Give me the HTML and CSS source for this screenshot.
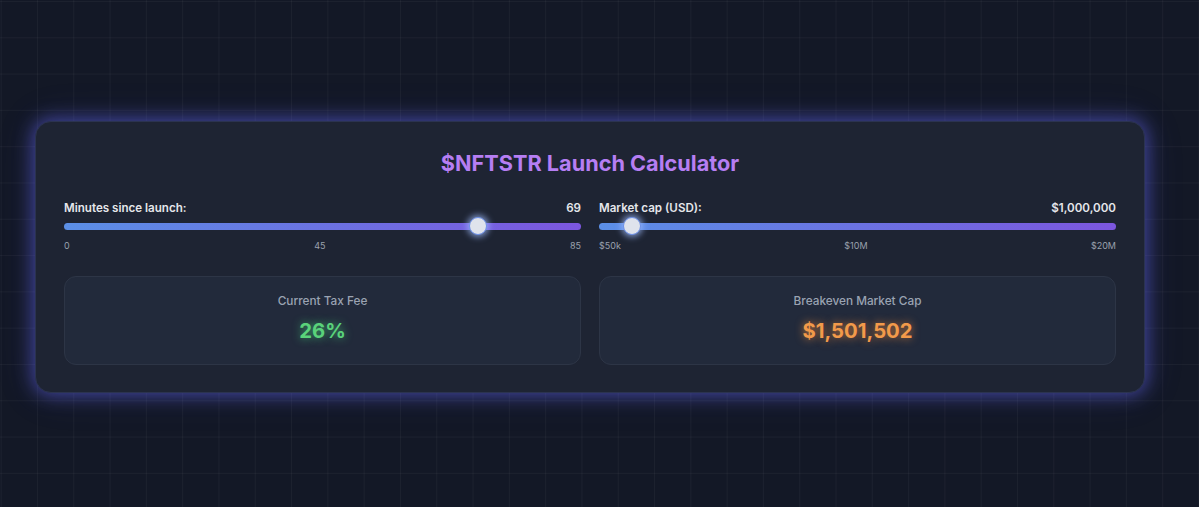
FILE: index.html
```html
<!DOCTYPE html>
<html lang="en">
<head>
<meta charset="utf-8">
<title>$NFTSTR Launch Calculator</title>
<link rel="stylesheet" href="styles.css">
</head>
<body>
<main class="card">
  <h1 class="title">$NFTSTR Launch Calculator</h1>
  <div class="controls">
    <div class="control">
      <div class="control-head">
        <span>Minutes since launch:</span>
        <span>69</span>
      </div>
      <input class="range" type="range" min="0" max="85" value="69">
      <div class="ticks"><span>0</span><span>45</span><span>85</span></div>
    </div>
    <div class="control">
      <div class="control-head">
        <span>Market cap (USD):</span>
        <span>$1,000,000</span>
      </div>
      <input class="range" type="range" min="50000" max="20000000" step="10000" value="1000000">
      <div class="ticks"><span>$50k</span><span>$10M</span><span>$20M</span></div>
    </div>
  </div>
  <div class="results">
    <div class="result">
      <div class="result-label">Current Tax Fee</div>
      <div class="result-value green">26%</div>
    </div>
    <div class="result">
      <div class="result-label">Breakeven Market Cap</div>
      <div class="result-value orange">$1,501,502</div>
    </div>
  </div>
</main>
</body>
</html>
```
FILE: styles.css
```css
* { box-sizing: border-box; }
html, body { height: 100%; }
body {
  margin: 0;
  padding: 121px 0 0 35px;
  font-family: Inter, "Noto Sans", "Liberation Sans", sans-serif;
  background-color: #131826;
  background-image:
    linear-gradient(rgba(255,255,255,0.04) 1px, transparent 1px),
    linear-gradient(90deg, rgba(255,255,255,0.04) 1px, transparent 1px);
  background-size: 36.3px 36.3px;
  background-position: 0.7px 1px;
  color: #e5e7eb;
}
.card {
  width: 1110px;
  height: 272px;
  padding: 25px 28px 28px;
  border: 1px solid #2b3350;
  border-radius: 16px;
  background: #1e2433;
  box-shadow: 0 0 18px 2px rgba(99, 102, 241, 0.55), 0 0 40px rgba(99, 102, 241, 0.15);
}
.title {
  margin: 0;
  text-align: center;
  font-size: 21.7px;
  line-height: 32px;
  font-weight: 700;
  color: #b67ef3;
}
.controls {
  margin-top: 20px;
  display: grid;
  grid-template-columns: 1fr 1fr;
  gap: 18px;
}
.control-head {
  display: flex;
  justify-content: space-between;
  font-size: 11.6px;
  line-height: 18px;
  font-weight: 600;
  color: #e5e7eb;
}
.range {
  -webkit-appearance: none;
  appearance: none;
  display: block;
  width: 100%;
  height: 18px;
  margin: 0;
  padding: 0;
  background: transparent;
  outline: none;
}
.range::-webkit-slider-runnable-track {
  height: 7px;
  border-radius: 4px;
  background: linear-gradient(90deg, #5b8fe6, #7c56de);
}
.range::-webkit-slider-thumb {
  -webkit-appearance: none;
  width: 18px;
  height: 18px;
  margin-top: -5.5px;
  border-radius: 50%;
  background: #dfe3ec;
  border: 1.5px solid #6c8fe8;
  box-shadow: 0 0 6px 2px rgba(160, 190, 255, 0.7);
}
.ticks {
  margin-top: 4px;
  display: flex;
  justify-content: space-between;
  font-size: 9px;
  line-height: 14px;
  color: #9aa1ad;
}
.results {
  margin-top: 23px;
  display: grid;
  grid-template-columns: 1fr 1fr;
  gap: 18px;
}
.result {
  height: 89px;
  padding-top: 15px;
  border: 1px solid #2d3546;
  border-radius: 12px;
  background: #222a3b;
  text-align: center;
}
.result-label {
  font-size: 11.8px;
  line-height: 18px;
  font-weight: 500;
  color: #9aa3b2;
}
.result-value {
  margin-top: 7px;
  font-size: 20.3px;
  line-height: 28px;
  font-weight: 700;
}
.green {
  color: #5ad27a;
  text-shadow: 0 0 8px rgba(74, 222, 128, 0.7);
}
.orange {
  color: #f29a4a;
  text-shadow: 0 0 8px rgba(251, 146, 60, 0.75);
}
```
